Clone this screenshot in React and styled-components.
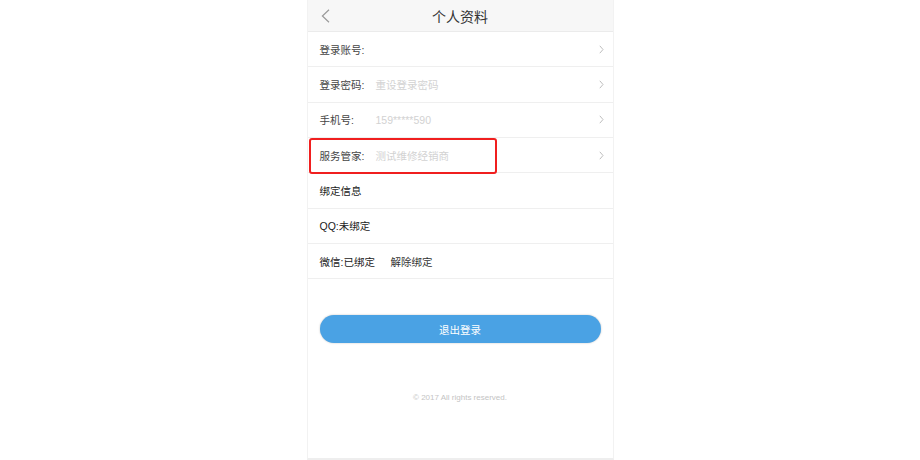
import React from "react";
import styled, { createGlobalStyle } from "styled-components";

const GlobalStyle = createGlobalStyle`
  html, body {
    margin: 0;
    padding: 0;
    background: #fff;
  }
  body {
    font-family: "Liberation Sans", "Noto Sans CJK SC", sans-serif;
    color: #333;
  }
`;

const Page = styled.div`
  display: flex;
  justify-content: center;
  width: 920px;
  height: 460px;
  overflow: hidden;
`;

const Phone = styled.div`
  display: flex;
  flex-direction: column;
  width: 305px;
  height: 458px;
  border-left: 1px solid #f2f2f2;
  border-right: 1px solid #f2f2f2;
  border-bottom: 2px solid #eeeeee;
  background: #fff;
`;

const Header = styled.div`
  position: relative;
  display: flex;
  align-items: center;
  justify-content: center;
  height: 31px;
  background: #f7f7f7;
  border-bottom: 1px solid #ebebeb;
  font-size: 14px;
  color: #333;
`;

const Back = styled.svg`
  position: absolute;
  left: 13px;
  top: 9px;
`;

const Row = styled.div`
  position: relative;
  display: flex;
  align-items: center;
  height: 34.33px;
  padding: 0 9px 0 12px;
  border-bottom: 1px solid #efefef;
  font-size: 10.5px;
`;

const Label = styled.span`
  min-width: 56px;
  color: ${(p) => (p.$dark ? "#222" : "#444")};
  white-space: nowrap;
`;

const Value = styled.span`
  flex: 1;
  color: #d2d2d2;
`;

const Action = styled.span`
  margin-left: 15px;
  color: #333;
`;

const Chevron = styled.svg`
  margin-left: auto;
`;

const Highlight = styled.div`
  position: absolute;
  left: 1px;
  top: 0;
  width: 184px;
  height: 32px;
  border: 2px solid #f01f1f;
  border-radius: 3px;
`;

const ButtonWrap = styled.div`
  padding: 36px 12px 0;
`;

const Logout = styled.button`
  width: 100%;
  height: 28px;
  border: none;
  border-radius: 14px;
  background: #4aa2e4;
  color: #fff;
  font-family: inherit;
  font-size: 10.5px;
  box-shadow: 0 0 2px rgba(0, 0, 0, 0.25);
`;

const Copyright = styled.div`
  margin-top: 50px;
  text-align: center;
  font-size: 8px;
  color: #c4c4c4;
`;

const ArrowRight = () => (
  <Chevron width="5" height="9" viewBox="0 0 5 9">
    <path d="M0.8 0.8 L4 4.5 L0.8 8.2" fill="none" stroke="#bdbdbd" strokeWidth="1" />
  </Chevron>
);

const rows = [
  { label: "登录账号:", value: "" },
  { label: "登录密码:", value: "重设登录密码" },
  { label: "手机号:", value: "159*****590" },
  { label: "服务管家:", value: "测试维修经销商", mark: true },
];

export default function App() {
  return (
    <>
      <GlobalStyle />
      <Page>
        <Phone>
          <Header>
            <Back width="9" height="14" viewBox="0 0 9 14">
              <path d="M8 0.7 L1.4 7 L8 13.3" fill="none" stroke="#9a9a9a" strokeWidth="1.2" />
            </Back>
            个人资料
          </Header>
          {rows.map((r) => (
            <Row key={r.label}>
              <Label>{r.label}</Label>
              <Value>{r.value}</Value>
              <ArrowRight />
              {r.mark && <Highlight />}
            </Row>
          ))}
          <Row>
            <Label $dark>绑定信息</Label>
          </Row>
          <Row>
            <Label $dark>QQ:未绑定</Label>
          </Row>
          <Row>
            <Label $dark>微信:已绑定</Label>
            <Action>解除绑定</Action>
          </Row>
          <ButtonWrap>
            <Logout>退出登录</Logout>
          </ButtonWrap>
          <Copyright>© 2017 All rights reserved.</Copyright>
        </Phone>
      </Page>
    </>
  );
}
